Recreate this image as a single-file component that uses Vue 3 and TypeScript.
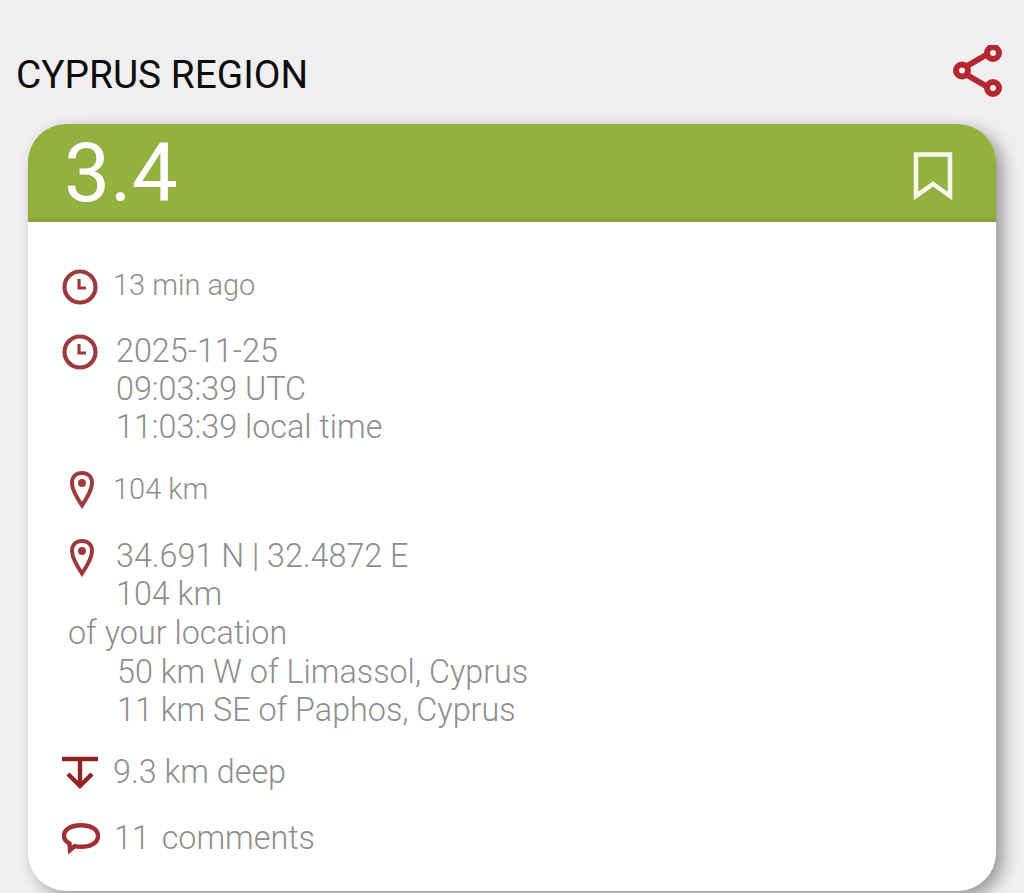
<script setup lang="ts">
</script>

<template>
  <div class="page">
    <header class="top">
      <h1 class="region">CYPRUS REGION</h1>
      <svg class="share" viewBox="0 0 50 52" width="50" height="52" fill="none" stroke="#b5262f" stroke-width="6">
        <path d="M14 21 L33 10 M14 30 L33 41" />
        <circle cx="9" cy="25.5" r="6" />
        <circle cx="40" cy="8" r="6" />
        <circle cx="40" cy="43" r="6" />
      </svg>
    </header>

    <section class="card">
      <div class="mag-bar">
        <span class="mag">3.4</span>
        <svg class="bookmark" viewBox="0 0 40 48" width="40" height="48" fill="none" stroke="#f6f9ec" stroke-width="4.5">
          <path d="M3 2.5 H37 V44 L20 32 L3 44 Z" />
        </svg>
      </div>

      <div class="details">
        <div class="row small first">
          <svg class="icon" viewBox="0 0 36 36" width="36" height="36" fill="none" stroke="#9c3a3d" stroke-width="4.2">
            <circle cx="18" cy="18" r="15.5" />
            <path d="M17 10 V19 H24" stroke-width="3.2" />
          </svg>
          <span>13 min ago</span>
        </div>

        <div class="row multi">
          <svg class="icon wide-gap" viewBox="0 0 36 36" width="36" height="36" fill="none" stroke="#9c3a3d" stroke-width="4.2">
            <circle cx="18" cy="18" r="15.5" />
            <path d="M17 10 V19 H24" stroke-width="3.2" />
          </svg>
          <div class="lines">
            <div>2025-11-25</div>
            <div>09:03:39 UTC</div>
            <div>11:03:39 local time</div>
          </div>
        </div>

        <div class="row small">
          <svg class="icon pin" viewBox="0 0 36 38" width="36" height="38" fill="none" stroke="#9c3a3d" stroke-width="4">
            <path d="M20 34.5 C15 27 10 19 10 12 C10 6 14 2 20 2 C26 2 30 6 30 12 C30 19 25 27 20 34.5 Z" />
            <circle cx="20" cy="12" r="4" fill="#9c3a3d" stroke="none" />
          </svg>
          <span>104 km</span>
        </div>

        <div class="row multi location">
          <svg class="icon pin wide-gap" viewBox="0 0 36 38" width="36" height="38" fill="none" stroke="#9c3a3d" stroke-width="4">
            <path d="M20 34.5 C15 27 10 19 10 12 C10 6 14 2 20 2 C26 2 30 6 30 12 C30 19 25 27 20 34.5 Z" />
            <circle cx="20" cy="12" r="4" fill="#9c3a3d" stroke="none" />
          </svg>
          <div class="lines">
            <div>34.691 N | 32.4872 E</div>
            <div>104 km</div>
          </div>
        </div>
        <div class="line-out">of your location</div>
        <div class="lines indented">
          <div>50 km W of Limassol, Cyprus</div>
          <div>11 km SE of Paphos, Cyprus</div>
        </div>

        <div class="row depth">
          <svg class="icon" viewBox="0 0 36 36" width="36" height="36" fill="none" stroke="#8f2326" stroke-width="4.4">
            <path d="M0 3 H36 M18 3 V30 M6 18 L18 30 L30 18" />
          </svg>
          <span>9.3 km deep</span>
        </div>

        <div class="row comments">
          <svg class="icon" viewBox="0 0 38 36" width="38" height="36" fill="none" stroke="#a12f33" stroke-width="4.4">
            <path d="M19 3.2 C29 3.2 36 7.5 36 14 C36 20.5 29 24.8 19 24.8 C16.5 24.8 14.5 24.6 12.5 24.2 L8 28 L7.5 21.5 C4 19.5 2 17 2 14 C2 7.5 9 3.2 19 3.2 Z" />
          </svg>
          <span><span class="count">11</span> comments</span>
        </div>
      </div>
    </section>
  </div>
</template>

<style>
html,
body {
  background: #efeff0;
  overflow: hidden;
}
</style>

<style scoped>
.page {
  width: 1024px;
  height: 893px;
  background: #efeff0;
  font-family: Roboto, "Liberation Sans", sans-serif;
  overflow: hidden;
}
.top {
  display: flex;
  align-items: center;
  justify-content: space-between;
  height: 124px;
  padding: 26px 21px 0 16px;
  box-sizing: border-box;
}
.region {
  margin: 0;
  font-size: 38.8px;
  font-weight: 400;
  color: #0c0c0c;
  line-height: 56px;
}
.share {
  margin-bottom: 9px;
}
.card {
  width: 968px;
  height: 767px;
  margin-left: 28px;
  background: #fff;
  border-radius: 38px;
  box-shadow: 7px 6px 16px rgba(0, 0, 0, 0.36);
  overflow: hidden;
}
.mag-bar {
  display: flex;
  align-items: center;
  justify-content: space-between;
  height: 98px;
  padding: 0 43px 0 36px;
  background: #93b13f;
  box-sizing: border-box;
  box-shadow: inset 0 -3px 3px rgba(90, 110, 30, 0.25);
}
.mag {
  color: #fff;
  font-size: 82px;
  font-weight: 400;
  line-height: 96px;
}
.bookmark {
  margin-top: 6px;
}
.details {
  padding: 44px 0 0 34px;
  color: #8e8e8e;
  font-size: 32.3px;
  font-weight: 300;
  line-height: 38px;
}
.row {
  display: flex;
  align-items: flex-start;
}
.icon {
  flex-shrink: 0;
  margin-right: 15px;
  margin-top: 3px;
}
.wide-gap {
  margin-right: 18px;
}
.pin {
  margin-top: 1px;
}
.small {
  font-size: 29px;
  margin-top: 24px;
}
.multi {
  margin-top: 27px;
}
.multi .icon {
  margin-top: 2px;
}
.first {
  margin-top: 0;
}
.location {
  margin-top: 28px;
}
.line-out {
  margin-top: 1px;
  padding-left: 6px;
}
.indented {
  margin-top: 1px;
  padding-left: 55px;
}
.depth {
  margin-top: 24px;
}
.comments {
  margin-top: 27px;
}
.comments .icon {
  margin-right: 14px;
}
.count {
  margin-right: 4px;
}
</style>
